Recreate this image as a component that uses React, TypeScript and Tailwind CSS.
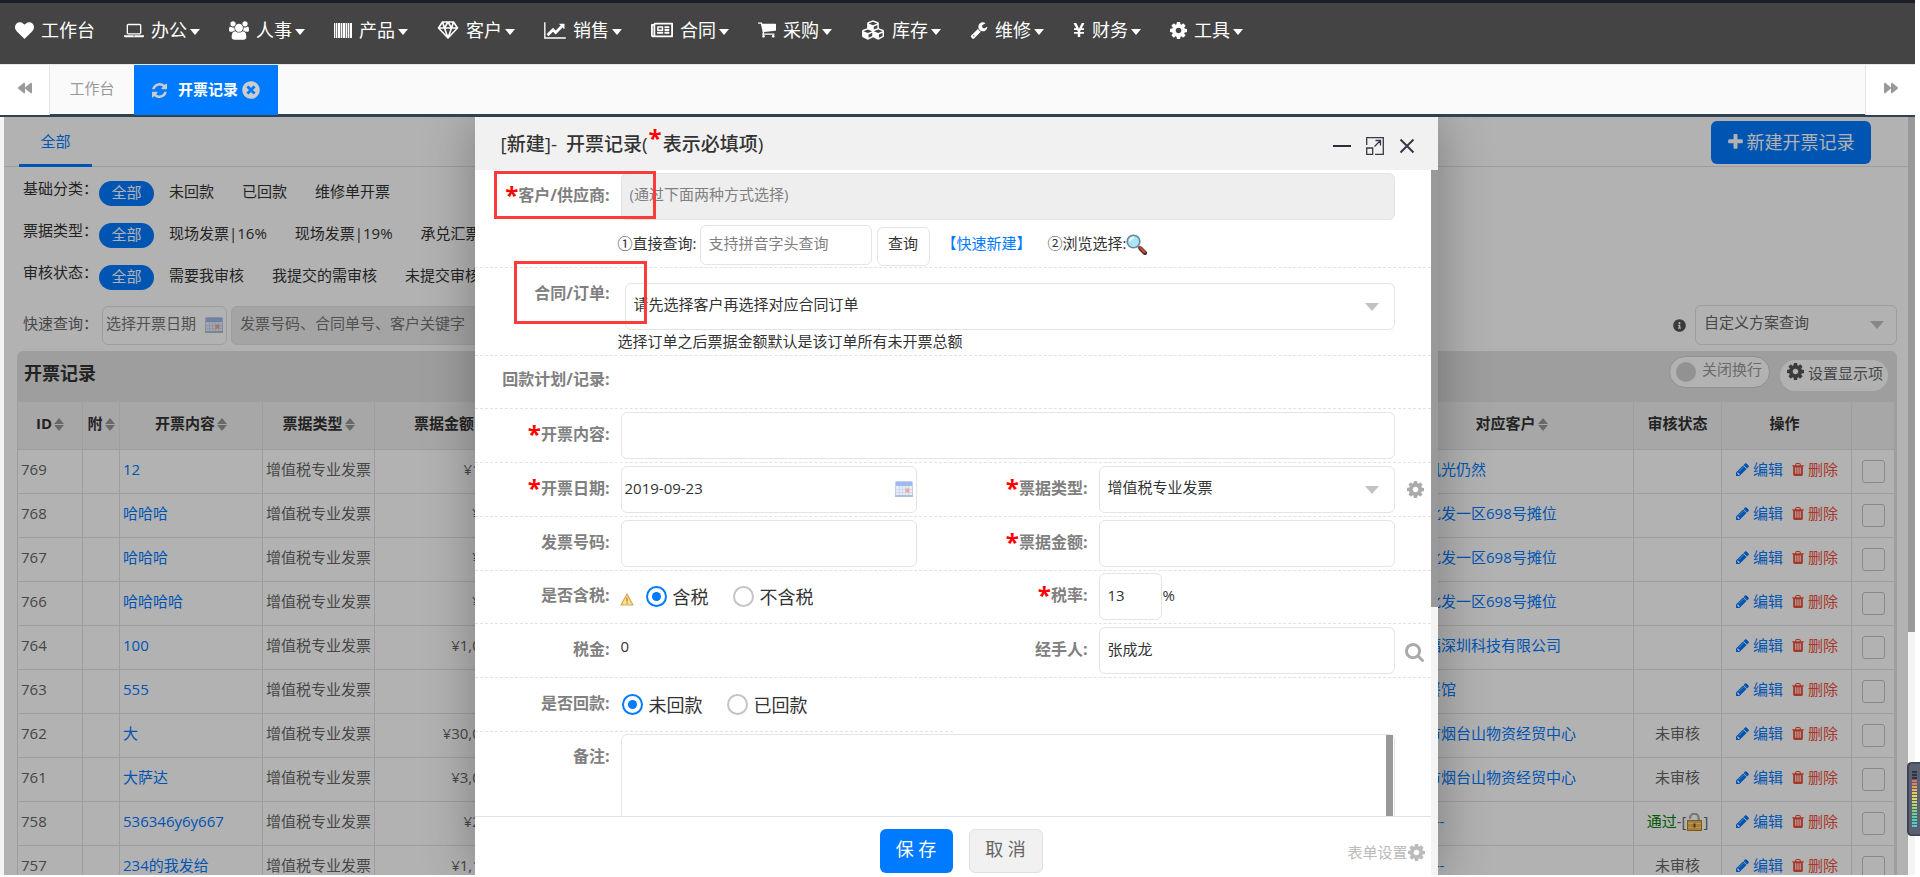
import React from 'react';
import type { ReactNode } from 'react';
import {
  FaBackward,
  FaForward,
  FaCubes,
  FaInfoCircle,
  FaRegNewspaper,
  FaTimesCircle,
  FaYenSign,
} from 'react-icons/fa';

const paths = {
  heart:
    'M896 1664q-26 0-44-18l-624-602q-10-8-27.5-26t-55.5-65.5-68-97.5-53.5-121-23.5-138q0-220 127-344t351-124q62 0 126.5 21.5t120 58 95.5 68.5 76 68q36-36 76-68t95.5-68.5 120-58 126.5-21.5q224 0 351 124t127 344q0 221-229 450l-623 600q-18 18-44 18z',
  cog: 'M1152 896q0-106-75-181t-181-75-181 75-75 181 75 181 181 75 181-75 75-181zm512-109v222q0 12-8 23t-20 13l-185 28q-19 54-39 91 35 50 107 138 10 12 10 25t-9 23q-27 37-99 108t-94 71q-12 0-26-9l-138-108q-44 23-91 38-16 136-29 186-7 28-36 28h-222q-14 0-24.5-8.5t-11.5-21.5l-28-184q-49-16-90-37l-141 107q-10 9-25 9-14 0-25-11-126-114-165-168-7-10-7-23 0-12 8-23 15-21 51-66.5t54-70.5q-27-50-41-99l-183-27q-13-2-21-12.5t-8-23.5v-222q0-12 8-23t19-13l186-28q14-46 39-92-40-57-107-138-10-12-10-24 0-10 9-23 26-36 98.5-107.5t94.5-71.5q13 0 26 10l138 107q44-23 91-38 16-136 29-186 7-28 36-28h222q14 0 24.5 8.5t11.5 21.5l28 184q49 16 90 37l142-107q9-9 24-9 13 0 25 10 129 119 165 170 7 8 7 22 0 12-8 23-15 21-51 66.5t-54 70.5q26 50 41 98l183 28q13 2 21 12.5t8 23.5z',
  trash:
    'M704 1376v-704q0-14-9-23t-23-9h-64q-14 0-23 9t-9 23v704q0 14 9 23t23 9h64q14 0 23-9t9-23zm256 0v-704q0-14-9-23t-23-9h-64q-14 0-23 9t-9 23v704q0 14 9 23t23 9h64q14 0 23-9t9-23zm256 0v-704q0-14-9-23t-23-9h-64q-14 0-23 9t-9 23v704q0 14 9 23t23 9h64q14 0 23-9t9-23zm-544-992h448l-48-117q-7-9-17-11h-317q-10 2-17 11zm928 32v64q0 14-9 23t-23 9h-96v948q0 83-47 143.5t-113 60.5h-832q-66 0-113-58.5t-47-141.5v-952h-96q-14 0-23-9t-9-23v-64q0-14 9-23t23-9h309l70-167q15-37 54-63t79-26h320q40 0 79 26t54 63l70 167h309q14 0 23 9t9 23z',
  pencil:
    'M491 1536l91-91-235-235-91 91v107h128v128h107zm523-928q0-22-22-22-10 0-17 7l-542 542q-7 7-7 17 0 22 22 22 10 0 17-7l542-542q7-7 7-17zm-54-192l416 416-832 832h-416v-416zm683 96q0 53-37 90l-166 166-416-416 166-165q36-38 90-38 53 0 91 38l235 234q37 39 37 91z',
  search:
    'M1216 832q0-185-131.5-316.5t-316.5-131.5-316.5 131.5-131.5 316.5 131.5 316.5 316.5 131.5 316.5-131.5 131.5-316.5zm512 832q0 52-38 90t-90 38q-54 0-90-38l-343-342q-179 124-399 124-143 0-273.5-55.5t-225-150-150-225-55.5-273.5 55.5-273.5 150-225 225-150 273.5-55.5 273.5 55.5 225 150 150 225 55.5 273.5q0 220-124 399l343 343q37 37 37 90z',
  plus: 'M1600 736v192q0 40-28 68t-68 28h-416v416q0 40-28 68t-68 28h-192q-40 0-68-28t-28-68v-416h-416q-40 0-68-28t-28-68v-192q0-40 28-68t68-28h416v-416q0-40 28-68t68-28h192q40 0 68 28t28 68v416h416q40 0 68 28t28 68z',
  refresh:
    'M1639 1056q0 5-1 7-64 268-268 434.5t-478 166.5q-146 0-282.5-55t-243.5-157l-129 129q-19 19-45 19t-45-19-19-45v-448q0-26 19-45t45-19h448q26 0 45 19t19 45-19 45l-137 137q71 66 161 102t187 36q134 0 250-65t186-179q11-17 53-117 8-23 30-23h192q13 0 22.5 9.5t9.5 22.5zm25-800v448q0 26-19 45t-45 19h-448q-26 0-45-19t-19-45 19-45l138-138q-148-137-349-137-134 0-250 65t-186 179q-11 17-53 117-8 23-30 23h-199q-13 0-22.5-9.5t-9.5-22.5v-7q65-268 270-434.5t480-166.5q146 0 284 55.5t245 156.5l130-129q19-19 45-19t45 19 19 45z',
  users:
    'M529 896q-162 5-265 128h-134q-82 0-138-40.5t-56-118.5q0-353 124-353 6 0 43.5 21t97.5 42.5 119 21.5q67 0 133-23-5 37-5 66 0 139 81 256zm1071 637q0 120-73 189.5t-194 69.5h-874q-121 0-194-69.5t-73-189.5q0-53 3.5-103.5t14-109 26.5-108.5 43-97.5 62-81 85.5-53.5 111.5-20q10 0 43 21.5t73 48 107 48 135 21.5 135-21.5 107-48 73-48 43-21.5q61 0 111.5 20t85.5 53.5 62 81 43 97.5 26.5 108.5 14 109 3.5 103.5zm-1024-1277q0 106-75 181t-181 75-181-75-75-181 75-181 181-75 181 75 75 181zm704 384q0 159-112.5 271.5t-271.5 112.5-271.5-112.5-112.5-271.5 112.5-271.5 271.5-112.5 271.5 112.5 112.5 271.5zm576 225q0 78-56 118.5t-138 40.5h-134q-103-123-265-128 81-117 81-256 0-29-5-66 66 23 133 23 59 0 119-21.5t97.5-42.5 43.5-21q124 0 124 353zm-128-609q0 106-75 181t-181 75-181-75-75-181 75-181 181-75 181 75 75 181z',
  laptop:
    'M416 1280q-66 0-113-47t-47-113v-704q0-66 47-113t113-47h1088q66 0 113 47t47 113v704q0 66-47 113t-113 47h-1088zm-32-864v704q0 13 9.5 22.5t22.5 9.5h1088q13 0 22.5-9.5t9.5-22.5v-704q0-13-9.5-22.5t-22.5-9.5h-1088q-13 0-22.5 9.5t-9.5 22.5zm1376 928h160v96q0 40-47 68t-113 28h-1600q-66 0-113-28t-47-68v-96h1760zm-720 96q16 0 16-16t-16-16h-160q-16 0-16 16t16 16h160z',
  lineChart:
    'M2048 1536v128h-2048v-1536h128v1408h1920zm-128-1248v435q0 21-19.5 29.5t-35.5-7.5l-121-121-633 633q-10 10-23 10t-23-10l-233-233-416 416-192-192 585-585q10-10 23-10t23 10l233 233 464-464-121-121q-16-16-7.5-35.5t29.5-19.5h435q14 0 23 9t9 23z',
  cart: 'M704 1536q0 52-38 90t-90 38-90-38-38-90 38-90 90-38 90 38 38 90zm896 0q0 52-38 90t-90 38-90-38-38-90 38-90 90-38 90 38 38 90zm128-1088v512q0 24-16.5 42.5t-40.5 21.5l-1044 122q13 60 13 70 0 16-24 64h920q26 0 45 19t19 45-19 45-45 19h-1024q-26 0-45-19t-19-45q0-11 8-31.5t16-36 21.5-40 15.5-29.5l-177-823h-204q-26 0-45-19t-19-45 19-45 45-19h256q16 0 28.5 6.5t19.5 15.5 13 24.5 8 26 5.5 29.5 4.5 26h1201q26 0 45 19t19 45z',
  wrench:
    'M448 1472q0-26-19-45t-45-19-45 19-19 45 19 45 45 19 45-19 19-45zm644-420l-682 682q-37 37-90 37-52 0-91-37l-106-108q-38-36-38-90 0-53 38-91l681-681q39 98 114.5 173.5t173.5 114.5zm634-435q0 39-23 106-47 134-164.5 217.5t-258.5 83.5q-185 0-316.5-131.5t-131.5-316.5 131.5-316.5 316.5-131.5q58 0 121.5 16.5t107.5 46.5q16 11 16 28t-16 28l-293 169v224l193 107q5-3 79-48.5t135.5-81 70.5-35.5q15 0 23.5 10t8.5 25z',
};

const Glyph = ({
  d,
  className,
  box = '0 0 1792 1792',
}: {
  d: string;
  className: string;
  box?: string;
}) => (
  <svg viewBox={box} className={className} fill="currentColor" aria-hidden="true">
    <path d={d} />
  </svg>
);

const Barcode = () => (
  <svg viewBox="0 0 18 15" className="h-[15px] w-[18px]" fill="currentColor" aria-hidden="true">
    <path d="M0 0h1v15H0zM2 0h1v15H2zM4 0h2v15H4zM7 0h1v15H7zM9 0h2v15H9zM12 0h1v15h-1zM14 0h1v15h-1zM16 0h2v15h-2z" />
    <path d="M0 0h18v15H0z" opacity="0.35" />
  </svg>
);

const Diamond = () => (
  <svg
    viewBox="0 0 21 18"
    className="h-[18px] w-[22px]"
    fill="none"
    stroke="currentColor"
    strokeWidth="1.6"
    strokeLinejoin="round"
    aria-hidden="true"
  >
    <path d="M5 1h11l4 6-9.500 10L1 7zM1 7h19M5 1l2 6 3.500 10L14 7l2-6M7 7l3.500-6L14 7" />
  </svg>
);

const Calendar = () => (
  <svg viewBox="0 0 18 16" className="h-4 w-[18px]" aria-hidden="true">
    <rect x="0.5" y="0.5" width="17" height="15" rx="1" fill="#e6edf9" stroke="#c3cfe4" />
    <rect x="1" y="1" width="16" height="4" fill="#9dbbee" />
    <path d="M1 8.500h16M1 11.500h16M4.500 5v9M7.500 5v9M10.500 5v9M13.500 5v9" stroke="#c6d3ea" strokeWidth="0.8" />
    <rect x="10.500" y="7.500" width="4" height="4" fill="#f3a894" />
    <rect x="0" y="14" width="18" height="2" fill="#b1bed4" />
  </svg>
);

const Warning = () => (
  <svg viewBox="0 0 14 13" className="h-[13px] w-[14px]" aria-hidden="true">
    <path d="M7 1l6 11H1z" fill="#fbe08c" stroke="#d8a559" strokeWidth="1.2" strokeLinejoin="round" />
    <path d="M7 4.500v4M7 9.500v1.300" stroke="#b98335" strokeWidth="1.300" />
  </svg>
);

const Magnifier = () => (
  <svg viewBox="0 0 21 21" className="h-[21px] w-[21px]" aria-hidden="true">
    <path d="M12 12l3 3" stroke="#777" strokeWidth="2.500" />
    <path d="M14.500 14.500l4.500 4.500" stroke="#4a3030" strokeWidth="4.200" strokeLinecap="round" />
    <path d="M14.500 14l4 4" stroke="#d9482b" strokeWidth="2.200" strokeLinecap="round" />
    <circle cx="7.500" cy="7.500" r="6.300" fill="#a9e4f7" stroke="#6d8791" strokeWidth="1.600" />
    <path d="M4 7.500a4 4 0 0 1 4-4" stroke="#eafaff" strokeWidth="2" fill="none" />
  </svg>
);

const Lock = () => (
  <svg viewBox="0 0 15 18" className="mx-px inline-block h-[18px] w-[15px] align-[-4px]" aria-hidden="true">
    <path d="M3 6V5a4.300 4.300 0 0 1 8.600 0v4" fill="none" stroke="#a8a8a8" strokeWidth="2.200" />
    <rect x="0.5" y="7.500" width="14" height="10" fill="#eeb84c" stroke="#b97f22" />
    <path d="M1 10.500h13M1 14.500h13" stroke="#f8dc92" />
    <path d="M7.500 10.500v4" stroke="#70501c" strokeWidth="2" />
  </svg>
);

const Sort = () => (
  <svg viewBox="0 0 10 13" className="ml-[2px] inline-block h-[13px] w-[10px] align-[-2px]" fill="#979797" aria-hidden="true">
    <path d="M5 0l5 6H0zM5 13l5-6H0z" />
  </svg>
);

const Caret = () => (
  <svg viewBox="0 0 14 8" className="pointer-events-none absolute top-5 right-4 h-2 w-[14px]" fill="#c2c2c2" aria-hidden="true">
    <path d="M0 0h14L7 8z" />
  </svg>
);

const nav: { label: string; icon: ReactNode; menu?: boolean }[] = [
  { label: '工作台', icon: <Glyph d={paths.heart} className="h-[19px] w-[19px]" /> },
  { label: '办公', menu: true, icon: <Glyph d={paths.laptop} box="0 0 1920 1792" className="h-[19px] w-5" /> },
  { label: '人事', menu: true, icon: <Glyph d={paths.users} box="-64 0 1920 1792" className="h-[19px] w-5" /> },
  { label: '产品', menu: true, icon: <Barcode /> },
  { label: '客户', menu: true, icon: <Diamond /> },
  { label: '销售', menu: true, icon: <Glyph d={paths.lineChart} box="0 0 2048 1792" className="h-[19px] w-[22px]" /> },
  { label: '合同', menu: true, icon: <FaRegNewspaper className="h-5 w-[22px]" /> },
  { label: '采购', menu: true, icon: <Glyph d={paths.cart} box="64 128 1664 1664" className="h-[18px] w-[18px]" /> },
  { label: '库存', menu: true, icon: <FaCubes className="h-[22px] w-6" /> },
  { label: '维修', menu: true, icon: <Glyph d={paths.wrench} className="h-[18px] w-[18px]" /> },
  { label: '财务', menu: true, icon: <FaYenSign className="h-4 w-3" /> },
  { label: '工具', menu: true, icon: <Glyph d={paths.cog} box="128 128 1536 1536" className="h-[17px] w-[17px]" /> },
];

const filters = [
  { label: '基础分类：', items: ['未回款', '已回款', '维修单开票'] },
  { label: '票据类型：', items: ['现场发票|16%', '现场发票|19%', '承兑汇票'] },
  { label: '审核状态：', items: ['需要我审核', '我提交的需审核', '未提交审核'] },
];

const rows = [
  { id: 769, content: '12', amount: '¥100.00', customer: '大家风光仍然', status: '' },
  { id: 768, content: '哈哈哈', amount: '¥10.00', customer: '市场批发一区698号摊位', status: '' },
  { id: 767, content: '哈哈哈', amount: '¥10.00', customer: '市场批发一区698号摊位', status: '' },
  { id: 766, content: '哈哈哈哈', amount: '¥10.00', customer: '市场批发一区698号摊位', status: '' },
  { id: 764, content: '100', amount: '¥1,000.00', customer: '中大福深圳科技有限公司', status: '' },
  { id: 763, content: '555', amount: '¥1.00', customer: '老王餐馆', status: '' },
  { id: 762, content: '大', amount: '¥30,000.00', customer: '烟台市烟台山物资经贸中心', status: '未审核' },
  { id: 761, content: '大萨达', amount: '¥3,000.00', customer: '烟台市烟台山物资经贸中心', status: '未审核' },
  { id: 758, content: '536346y6y667', amount: '¥200.00', customer: '散客 ---', status: '通过' },
  { id: 757, content: '234的我发给', amount: '¥1,100.00', customer: '散客 ---', status: '未审核' },
];

const Star = ({ className = 'align-[-3px]' }: { className?: string }) => (
  <span className={`text-2xl leading-none font-bold text-[#ff0000] ${className}`}>*</span>
);

const fieldBox = 'h-[47px] w-full rounded-md border border-[#e4e4e4] bg-white px-2 pb-1 text-[15px] text-[#333]';

const FieldLabel = ({ htmlFor, required, children }: { htmlFor?: string; required?: boolean; children: ReactNode }) => (
  <label
    htmlFor={htmlFor}
    className="mr-[11px] flex h-11 w-[135px] shrink-0 items-center justify-end font-bold whitespace-nowrap text-[#808080]"
  >
    <span className="leading-6">
      {required && <Star />}
      {children}
    </span>
  </label>
);

const Radio = ({ name, label, checked }: { name: string; label: string; checked?: boolean }) => (
  <label className="flex items-center gap-1.5 text-lg text-[#333]">
    <input
      type="radio"
      name={name}
      defaultChecked={checked}
      className="grid size-[21px] appearance-none place-content-center rounded-full border-2 border-[#c4c4c4] before:size-[9px] before:rounded-full checked:border-[#007aff] checked:before:bg-[#007aff]"
    />
    {label}
  </label>
);

const line = 'border-b border-dashed border-[#e2e2e2]';

const InvoiceList = () => (
  <div className="text-[15px] text-[#666]">
    {/* 顶部标签与新建按钮 */}
    <div className="flex h-[50px] items-start justify-between border-b border-[#e2e2e2] pr-[37px] pl-[15px]">
      <a href="#all" className="flex h-[50px] w-[73px] items-center justify-center border-b-[3px] border-[#007aff] pt-[2px] text-[#007aff]">
        全部
      </a>
      <button className="mt-1 flex h-[43px] w-40 items-center justify-center gap-1 rounded-md bg-[#007aff] pb-[2px] text-lg text-white">
        <Glyph d={paths.plus} box="192 128 1408 1536" className="h-4 w-[15px]" />
        新建开票记录
      </button>
    </div>

    {/* 分类筛选 */}
    <div className="pt-2 pl-[19px] text-[#333]">
      {filters.map((f) => (
        <div key={f.label} className="flex h-[42px] items-start">
          <span className="mt-[2px] w-[76px]">{f.label}</span>
          <a href="#all" className="mt-[6px] flex h-[25px] w-[55px] items-center justify-center rounded-full bg-[#007aff] pb-[3px] text-white">
            全部
          </a>
          {f.items.map((item) => (
            <a key={item} href="#filter" className="mt-[5px] mr-[13px] ml-[15px] whitespace-nowrap">
              {item}
            </a>
          ))}
        </div>
      ))}
    </div>

    {/* 快速查询 */}
    <div className="flex items-center pt-1 pr-[11px] pb-[6px] pl-[19px]">
      <label htmlFor="quick-date" className="w-[79px] pb-[3px]">快速查询：</label>
      <div className="relative w-[125px]">
        <input
          id="quick-date"
          placeholder="选择开票日期"
          className="h-[39px] w-full rounded-md border border-[#e2e2e2] pb-[5px] pl-[3px] placeholder:text-[#757575]"
        />
        <span className="absolute top-[11px] right-1">
          <Calendar />
        </span>
      </div>
      <input
        aria-label="关键字"
        placeholder="发票号码、合同单号、客户关键字"
        className="ml-1 h-[39px] w-[300px] rounded-md border border-[#e2e2e2] bg-[#ebebeb] px-2 pb-[5px] placeholder:text-[#757575]"
      />
      <FaInfoCircle className="mr-[9px] ml-auto size-[13px] text-[#555]" />
      <div className="relative w-[202px]">
        <select aria-label="自定义方案" className="h-10 w-full appearance-none rounded-md border border-[#e2e2e2] px-2 pb-[6px] text-[#666]">
          <option>自定义方案查询</option>
        </select>
        <svg viewBox="0 0 14 8" className="pointer-events-none absolute top-4 right-[13px] h-2 w-[14px]" fill="#c2c2c2" aria-hidden="true">
          <path d="M0 0h14L7 8z" />
        </svg>
      </div>
    </div>

    {/* 列表 */}
    <div className="mr-[11px] ml-[13px] rounded-t-md border-r-2 border-[#e2e2e2] bg-[#e2e2e2]">
      <div className="flex h-[50px] items-start pr-[7px] pl-[7px]">
        <h2 className="mt-2 text-lg font-bold text-[#333]">开票记录</h2>
        <button className="mt-[5px] ml-auto flex h-8 w-[101px] items-center rounded-full border border-[#d0d0d0] bg-white pl-[6px] text-[#999]">
          <span className="mr-[6px] size-5 rounded-full bg-[#d2d2d2]" />
          <span className="pb-[6px]">关闭换行</span>
        </button>
        <button className="mt-[9px] ml-[10px] flex h-[31px] w-[108px] items-center gap-1 rounded-full bg-white pl-[7px]">
          <Glyph d={paths.cog} box="128 128 1536 1536" className="mb-2 size-[17px] text-[#555]" />
          <span className="pb-1 whitespace-nowrap">设置显示项</span>
        </button>
      </div>
      <table className="w-full table-fixed border-collapse bg-white">
        <colgroup>
          <col className="w-[65px]" />
          <col className="w-[37px]" />
          <col className="w-[143px]" />
          <col className="w-[112px]" />
          <col className="w-[151px]" />
          <col />
          <col className="w-[244px]" />
          <col className="w-[88px]" />
          <col className="w-[130px]" />
          <col className="w-[43px]" />
        </colgroup>
        <thead>
          <tr className="h-12 bg-[#f0f0f0] text-[#333] [&>th]:border [&>th]:border-[#e2e2e2] [&>th]:px-0 [&>th]:pb-1 [&>th]:whitespace-nowrap">
            <th>ID<Sort /></th>
            <th>附<Sort /></th>
            <th>开票内容<Sort /></th>
            <th>票据类型<Sort /></th>
            <th>票据金额<Sort /></th>
            <th />
            <th>对应客户<Sort /></th>
            <th>审核状态</th>
            <th className="pr-1!">操作</th>
            <th />
          </tr>
        </thead>
        <tbody>
          {rows.map((r) => (
            <tr key={r.id} className="h-11 [&>td]:border [&>td]:border-[#e2e2e2] [&>td]:py-0 [&>td]:pb-1 [&>td]:whitespace-nowrap">
              <td className="pl-[3px]">{r.id}</td>
              <td />
              <td className="pl-[3px]"><a href="#detail" className="text-[#007aff]">{r.content}</a></td>
              <td className="pl-[3px]">增值税专业发票</td>
              <td className="pr-[6px] text-right">{r.amount}</td>
              <td />
              <td className="pl-[6px]"><a href="#customer" className="text-[#007aff]">{r.customer}</a></td>
              <td className="text-center">
                {r.status === '通过' ? (
                  <>
                    <span className="text-[#008000]">通过</span>-[<Lock />]
                  </>
                ) : (
                  r.status
                )}
              </td>
              <td>
                <div className="flex items-center pl-[14px]">
                  <a href="#edit" className="flex items-center gap-1 text-[#007aff]">
                    <Glyph d={paths.pencil} box="128 128 1536 1536" className="size-[13px]" />
                    编辑
                  </a>
                  <a href="#delete" className="ml-[9px] flex items-center gap-1 text-[#f3503c]">
                    <Glyph d={paths.trash} box="192 128 1408 1536" className="h-[13px] w-3" />
                    删除
                  </a>
                </div>
              </td>
              <td className="pt-[2px]! text-center">
                <input
                  type="checkbox"
                  aria-label={`选择 ${r.id}`}
                  className="size-[23px] appearance-none rounded-[3px] border border-[#c4c4c4] align-middle"
                />
              </td>
            </tr>
          ))}
        </tbody>
      </table>
    </div>
  </div>
);

const InvoiceForm = () => (
  <form className="min-h-0 flex-1 overflow-hidden bg-white text-base">
    {/* 客户/供应商 */}
    <div className={`relative h-[98px] pt-[3px] ${line}`}>
      <div className="flex">
        <FieldLabel htmlFor="customer" required>客户/供应商:</FieldLabel>
        <div className="mr-9 flex-1">
          <input
            id="customer"
            readOnly
            placeholder="(通过下面两种方式选择)"
            className="h-[47px] w-full rounded-md border border-[#e4e4e4] bg-[#eee] px-2 pb-[6px] text-[15px] placeholder:text-[#808080]"
          />
        </div>
      </div>
      <div className="flex items-start pt-[5px] pl-[143px] text-[15px] text-[#333]">
        <label htmlFor="pinyin" className="mt-[7px] w-[82px] whitespace-nowrap">①直接查询:</label>
        <input
          id="pinyin"
          placeholder="支持拼音字头查询"
          className="h-10 w-[172px] rounded-md border border-[#e4e4e4] px-2 pb-1 placeholder:text-[#808080]"
        />
        <button type="button" className="mt-[2px] ml-[5px] h-[39px] w-[53px] rounded-md border border-[#e4e4e4] pb-[6px]">
          查询
        </button>
        <a href="#new-customer" className="mt-[7px] ml-3 text-[#007aff]">【快速新建】</a>
        <span className="mt-[7px] ml-4">②浏览选择:</span>
        <button type="button" aria-label="浏览选择" className="mt-[9px]">
          <Magnifier />
        </button>
      </div>
      <span className="pointer-events-none absolute top-px left-[19px] h-12 w-[162px] border-[3px] border-[#fb3a3a]" />
    </div>

    {/* 合同/订单 */}
    <div className={`relative h-[88px] ${line}`}>
      <div className="flex">
        <div className="pt-[3px]">
          <FieldLabel htmlFor="order">合同/订单:</FieldLabel>
        </div>
        <div className="relative mt-[15px] mr-9 ml-1 flex-1">
          <select id="order" className={`${fieldBox} appearance-none`}>
            <option>请先选择客户再选择对应合同订单</option>
          </select>
          <Caret />
        </div>
      </div>
      <p className="pl-[143px] text-[15px] leading-[22px] text-[#333]">选择订单之后票据金额默认是该订单所有未开票总额</p>
      <span className="pointer-events-none absolute top-[-7px] left-[39px] h-[63px] w-[133px] border-[3px] border-[#fb3a3a]" />
    </div>

    {/* 回款计划 */}
    <div className={`flex h-[53px] pt-px ${line}`}>
      <FieldLabel>回款计划/记录:</FieldLabel>
    </div>

    {/* 开票内容 */}
    <div className={`flex h-[54px] pt-[3px] ${line}`}>
      <FieldLabel htmlFor="content" required>开票内容:</FieldLabel>
      <div className="mr-9 flex-1">
        <input id="content" className={fieldBox} />
      </div>
    </div>

    {/* 开票日期 / 票据类型 */}
    <div className={`flex h-[54px] pt-[3px] ${line}`}>
      <div className="flex flex-1">
        <FieldLabel htmlFor="date" required>开票日期:</FieldLabel>
        <div className="relative mr-9 flex-1">
          <input id="date" defaultValue="2019-09-23" className={`${fieldBox} pl-[3px]!`} />
          <span className="absolute top-[15px] right-1">
            <Calendar />
          </span>
        </div>
      </div>
      <div className="relative flex flex-1">
        <FieldLabel htmlFor="type" required>票据类型:</FieldLabel>
        <div className="relative mr-9 flex-1">
          <select id="type" className={`${fieldBox} appearance-none`}>
            <option>增值税专业发票</option>
          </select>
          <Caret />
        </div>
        <button type="button" aria-label="类型设置" className="absolute top-[15px] right-[7px] text-[#aaa]">
          <Glyph d={paths.cog} box="128 128 1536 1536" className="size-[17px]" />
        </button>
      </div>
    </div>

    {/* 发票号码 / 票据金额 */}
    <div className={`flex h-[54px] pt-[3px] ${line}`}>
      <div className="flex flex-1">
        <FieldLabel htmlFor="number">发票号码:</FieldLabel>
        <div className="mr-9 flex-1">
          <input id="number" className={fieldBox} />
        </div>
      </div>
      <div className="flex flex-1">
        <FieldLabel htmlFor="amount" required>票据金额:</FieldLabel>
        <div className="mr-9 flex-1">
          <input id="amount" className={fieldBox} />
        </div>
      </div>
    </div>

    {/* 是否含税 / 税率 */}
    <div className={`flex h-[53px] pt-[2px] ${line}`}>
      <div className="flex flex-1">
        <FieldLabel>是否含税:</FieldLabel>
        <div className="flex h-[47px] items-center">
          <span className="-ml-px pt-[6px]"><Warning /></span>
          <span className="ml-3 flex gap-6">
            <Radio name="tax" label="含税" checked />
            <Radio name="tax" label="不含税" />
          </span>
        </div>
      </div>
      <div className="flex flex-1">
        <FieldLabel htmlFor="rate" required>税率:</FieldLabel>
        <div className="w-[63px]">
          <input id="rate" defaultValue="13" className={fieldBox} />
        </div>
        <span className="mt-[11px] ml-px text-[15px] text-[#333]">%</span>
      </div>
    </div>

    {/* 税金 / 经手人 */}
    <div className={`flex h-[54px] pt-[3px] ${line}`}>
      <div className="flex flex-1">
        <FieldLabel>税金:</FieldLabel>
        <span className="mt-2 text-[15px] text-[#333]">0</span>
      </div>
      <div className="relative flex flex-1">
        <FieldLabel htmlFor="handler">经手人:</FieldLabel>
        <div className="mr-9 flex-1">
          <input id="handler" defaultValue="张成龙" className={fieldBox} />
        </div>
        <button type="button" aria-label="选择经手人" className="absolute top-4 right-[7px] text-[#aaa]">
          <Glyph d={paths.search} box="64 128 1664 1664" className="size-[19px]" />
        </button>
      </div>
    </div>

    {/* 是否回款 */}
    <div className={`flex h-[54px] w-1/2 pt-[3px] ${line}`}>
      <FieldLabel>是否回款:</FieldLabel>
      <div className="flex h-[47px] items-center gap-6 pl-px">
        <Radio name="paid" label="未回款" checked />
        <Radio name="paid" label="已回款" />
      </div>
    </div>

    {/* 备注 */}
    <div className="flex pt-[2px]">
      <FieldLabel htmlFor="remark">备注:</FieldLabel>
      <div className="relative mr-9 h-[120px] flex-1">
        <textarea id="remark" className="h-full w-full resize-none rounded-md border border-[#e4e4e4]" />
        <span className="absolute top-px right-[2px] h-full w-[7px] bg-[#999]" />
      </div>
    </div>
  </form>
);

const InvoiceDialog = () => (
  <div
    role="dialog"
    aria-label="开票记录"
    className="flex w-full max-w-[963px] flex-col bg-white shadow-[1px_1px_50px_rgba(0,0,0,0.3)]"
  >
    <header className="flex h-[53px] shrink-0 items-center justify-between rounded-t-sm bg-[#f1f1f1] pr-[23px] pl-[26px]">
      <h1 className="pb-1 text-[19px] leading-7 font-medium text-[#333]">
        <span className="mr-1">[新建]-</span> 开票记录(
        <Star className="mx-px align-[4px]" />
        表示必填项)
      </h1>
      <div className="flex items-center gap-[15px] pt-1 text-[#3a3848]">
        <button aria-label="最小化" className="h-[2px] w-[18px] bg-[#2d2c3b]" />
        <button aria-label="最大化">
          <svg viewBox="0 0 18 18" className="size-[18px]" fill="none" stroke="currentColor" strokeWidth="1.300">
            <path d="M0.700 8V0.700h16.600v16.600H9M0.700 11h6v6.300h-6zM8.500 9.500L14 4M9.500 3.500H14.500V8.500" />
          </svg>
        </button>
        <button aria-label="关闭">
          <svg viewBox="0 0 16 16" className="size-4" fill="none" stroke="currentColor" strokeWidth="2">
            <path d="M1.500 1.500l13 13M14.500 1.500l-13 13" />
          </svg>
        </button>
      </div>
    </header>
    <div className="flex min-h-0 flex-1">
      <div className="flex min-w-0 flex-1 flex-col">
        <InvoiceForm />
        <footer className="relative flex h-[59px] shrink-0 justify-center gap-4 border-t border-[#e2e2e2] bg-white pt-3 pl-[17px]">
          <button className="h-11 w-[73px] rounded-md bg-[#007aff] pb-1 text-lg text-white">保 存</button>
          <button className="h-11 w-[74px] rounded-md border border-[#e0e0e0] bg-[#f1f1f1] pb-1 text-lg text-[#666]">取 消</button>
          <a href="#form-settings" className="absolute top-6 right-[6px] flex items-center text-[15px] text-[#bbb]">
            表单设置
            <Glyph d={paths.cog} box="128 128 1536 1536" className="size-[17px]" />
          </a>
        </footer>
      </div>
      <div className="w-[7px] bg-[#f4f4f4]">
        <div className="h-[62%] bg-[#999]" />
      </div>
    </div>
  </div>
);

const meter = ['#30343f', '#30343f', '#30343f', '#e0705c', '#e0805c', '#e8a05a', '#e8b45a', '#e8c85a', '#e6da5c', '#d8dc5e', '#c4dc60', '#aedb66', '#96d86e', '#7ed67c', '#6cd48e', '#5cd2a2', '#54d0b4', '#50cfc4', '#4ecfd0'];

const App = () => {
  return (
    <div className="relative h-screen overflow-hidden bg-white pr-[5px] pb-[2px] font-['Open_Sans','Noto_Sans_CJK_SC',sans-serif]">
      <div className="flex h-full flex-col">
        {/* 主导航 */}
        <nav className="flex h-16 shrink-0 items-center gap-[29px] border-t-[3px] border-[#1b1f25] bg-[#444] pb-[7px] pl-[15px] text-lg text-white">
          {nav.map((n) => (
            <a key={n.label} href="#nav" className="flex items-center gap-[7px] whitespace-nowrap">
              {n.icon}
              <span className="flex items-center gap-[3px]">
                {n.label}
                {n.menu && (
                  <svg viewBox="0 0 10 6" className="mt-[3px] h-[6px] w-[10px]" fill="currentColor" aria-hidden="true">
                    <path d="M0 0h10L5 6z" />
                  </svg>
                )}
              </span>
            </a>
          ))}
        </nav>

        {/* 页签 */}
        <div className="flex h-[53px] shrink-0 border-t border-b-2 border-t-[#e7e7e7] border-b-[#304252] bg-[#fafafa] text-[15px] text-[#999]">
          <button aria-label="向左" className="flex w-[50px] items-center justify-center border-r border-[#e7e7e7] bg-white pb-1">
            <FaBackward className="size-[14px]" />
          </button>
          <a href="#desk" className="flex w-[84px] items-center justify-center border-b border-[#304252] pb-[3px]">工作台</a>
          <div className="flex w-36 items-center bg-[#007aff] pl-[18px] font-bold text-white">
            <Glyph d={paths.refresh} box="128 128 1536 1536" className="size-[15px] text-[#ccc]" />
            <span className="ml-[11px] pb-[2px]">开票记录</span>
            <FaTimesCircle className="ml-1 size-[18px] text-[#ccc]" />
          </div>
          <div className="flex-1 border-b border-[#304252]" />
          <button aria-label="向右" className="flex w-[50px] items-center justify-center border-l border-[#e7e7e7] bg-white pb-1">
            <FaForward className="size-[14px]" />
          </button>
        </div>

        <main className="flex min-h-0 flex-1 bg-[#f4f4f4] pl-1">
          <div className="relative min-w-0 flex-1 overflow-hidden bg-white">
            <InvoiceList />
            {/* 遮罩与弹窗 */}
            <div className="absolute inset-0 flex justify-center bg-black/30">
              <InvoiceDialog />
            </div>
          </div>
          <div className="w-[7px]">
            <div className="h-[68%] bg-[#999]" />
          </div>
        </main>
      </div>

      {/* 右侧悬浮电平条 */}
      <svg viewBox="0 0 13 74" className="absolute right-0 bottom-[41px] h-[74px] w-[13px]" aria-hidden="true">
        <path d="M13 0H5Q0 0 0 5v64q0 5 5 5h8z" fill="#3c4250" />
        <path d="M13 1.500H5.500Q2 1.500 2 5v64q0 3.500 3.500 3.500H13z" fill="#5a6172" />
        {meter.map((c, i) => (
          <rect key={i} x="5" y={9 + i * 3} width="5" height="2" fill={c} />
        ))}
      </svg>
    </div>
  );
};

export default App;
